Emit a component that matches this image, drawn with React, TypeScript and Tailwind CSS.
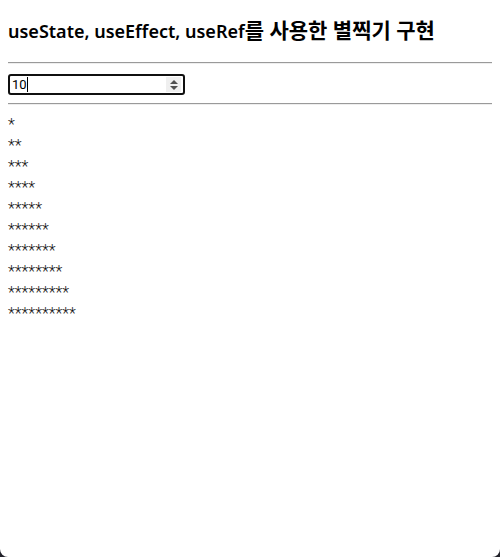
import { useState } from "react";

export default function App() {
  const [count, setCount] = useState("10");
  const value = Math.max(0, Number(count) || 0);
  const rows = Array.from({ length: value }, (_, i) => i + 1);

  return (
    <main className="flex min-h-screen flex-col bg-[#22222a] font-['Noto_Sans','Noto_Sans_CJK_KR',sans-serif]">
      <div className="flex-1 rounded-b-lg bg-white px-2 pt-[19px] text-black">
        <h3 className="mb-5 text-[18px] leading-[22px] font-semibold">
          useState, useEffect, useRef
          <span className="text-[21px] font-bold">를 사용한 별찍기 구현</span>
        </h3>
        <hr className="border-y border-t-[#9a9a9a] border-b-[#eeeeee]" />
        <div className="flex pt-[10px] pb-2">
          <div className="relative flex">
            <input
              type="number"
              aria-label="별 개수"
              autoFocus
              value={count}
              onChange={(e) => setCount(e.target.value)}
              className="h-[21px] w-[177px] rounded-[3px] border-2 border-[#101010] pr-5 pl-[2px] font-['Roboto',sans-serif] text-[13px] leading-4 caret-transparent outline-none [&::-webkit-inner-spin-button]:appearance-none"
            />
            <span aria-hidden="true" className="pointer-events-none absolute inset-y-[3px] left-0 flex pl-1 font-['Roboto',sans-serif] text-[13px] leading-4">
              <span className="invisible">{count}</span>
              <span className="w-px bg-black" />
            </span>
            <div className="absolute inset-y-[3px] right-1 flex w-[15px] flex-col bg-[#efefef] text-[#505050]">
              <button type="button" aria-label="증가" onClick={() => setCount(String(value + 1))} className="flex flex-1 items-end justify-center pb-px">
                <svg width="8" height="4" viewBox="0 0 8 4" fill="currentColor">
                  <path d="M4 0 8 4H0z" />
                </svg>
              </button>
              <button type="button" aria-label="감소" onClick={() => setCount(String(Math.max(0, value - 1)))} className="flex flex-1 items-start justify-center pt-px">
                <svg width="8" height="4" viewBox="0 0 8 4" fill="currentColor">
                  <path d="M0 0h8L4 4z" />
                </svg>
              </button>
            </div>
          </div>
        </div>
        <hr className="border-y border-t-[#9a9a9a] border-b-[#eeeeee]" />
        <div className="pt-[9px] font-['Roboto',sans-serif] text-base leading-[21px] font-light text-[#111111]">
          {rows.map((n) => (
            <div key={n}>{"*".repeat(n)}</div>
          ))}
        </div>
      </div>
    </main>
  );
}
